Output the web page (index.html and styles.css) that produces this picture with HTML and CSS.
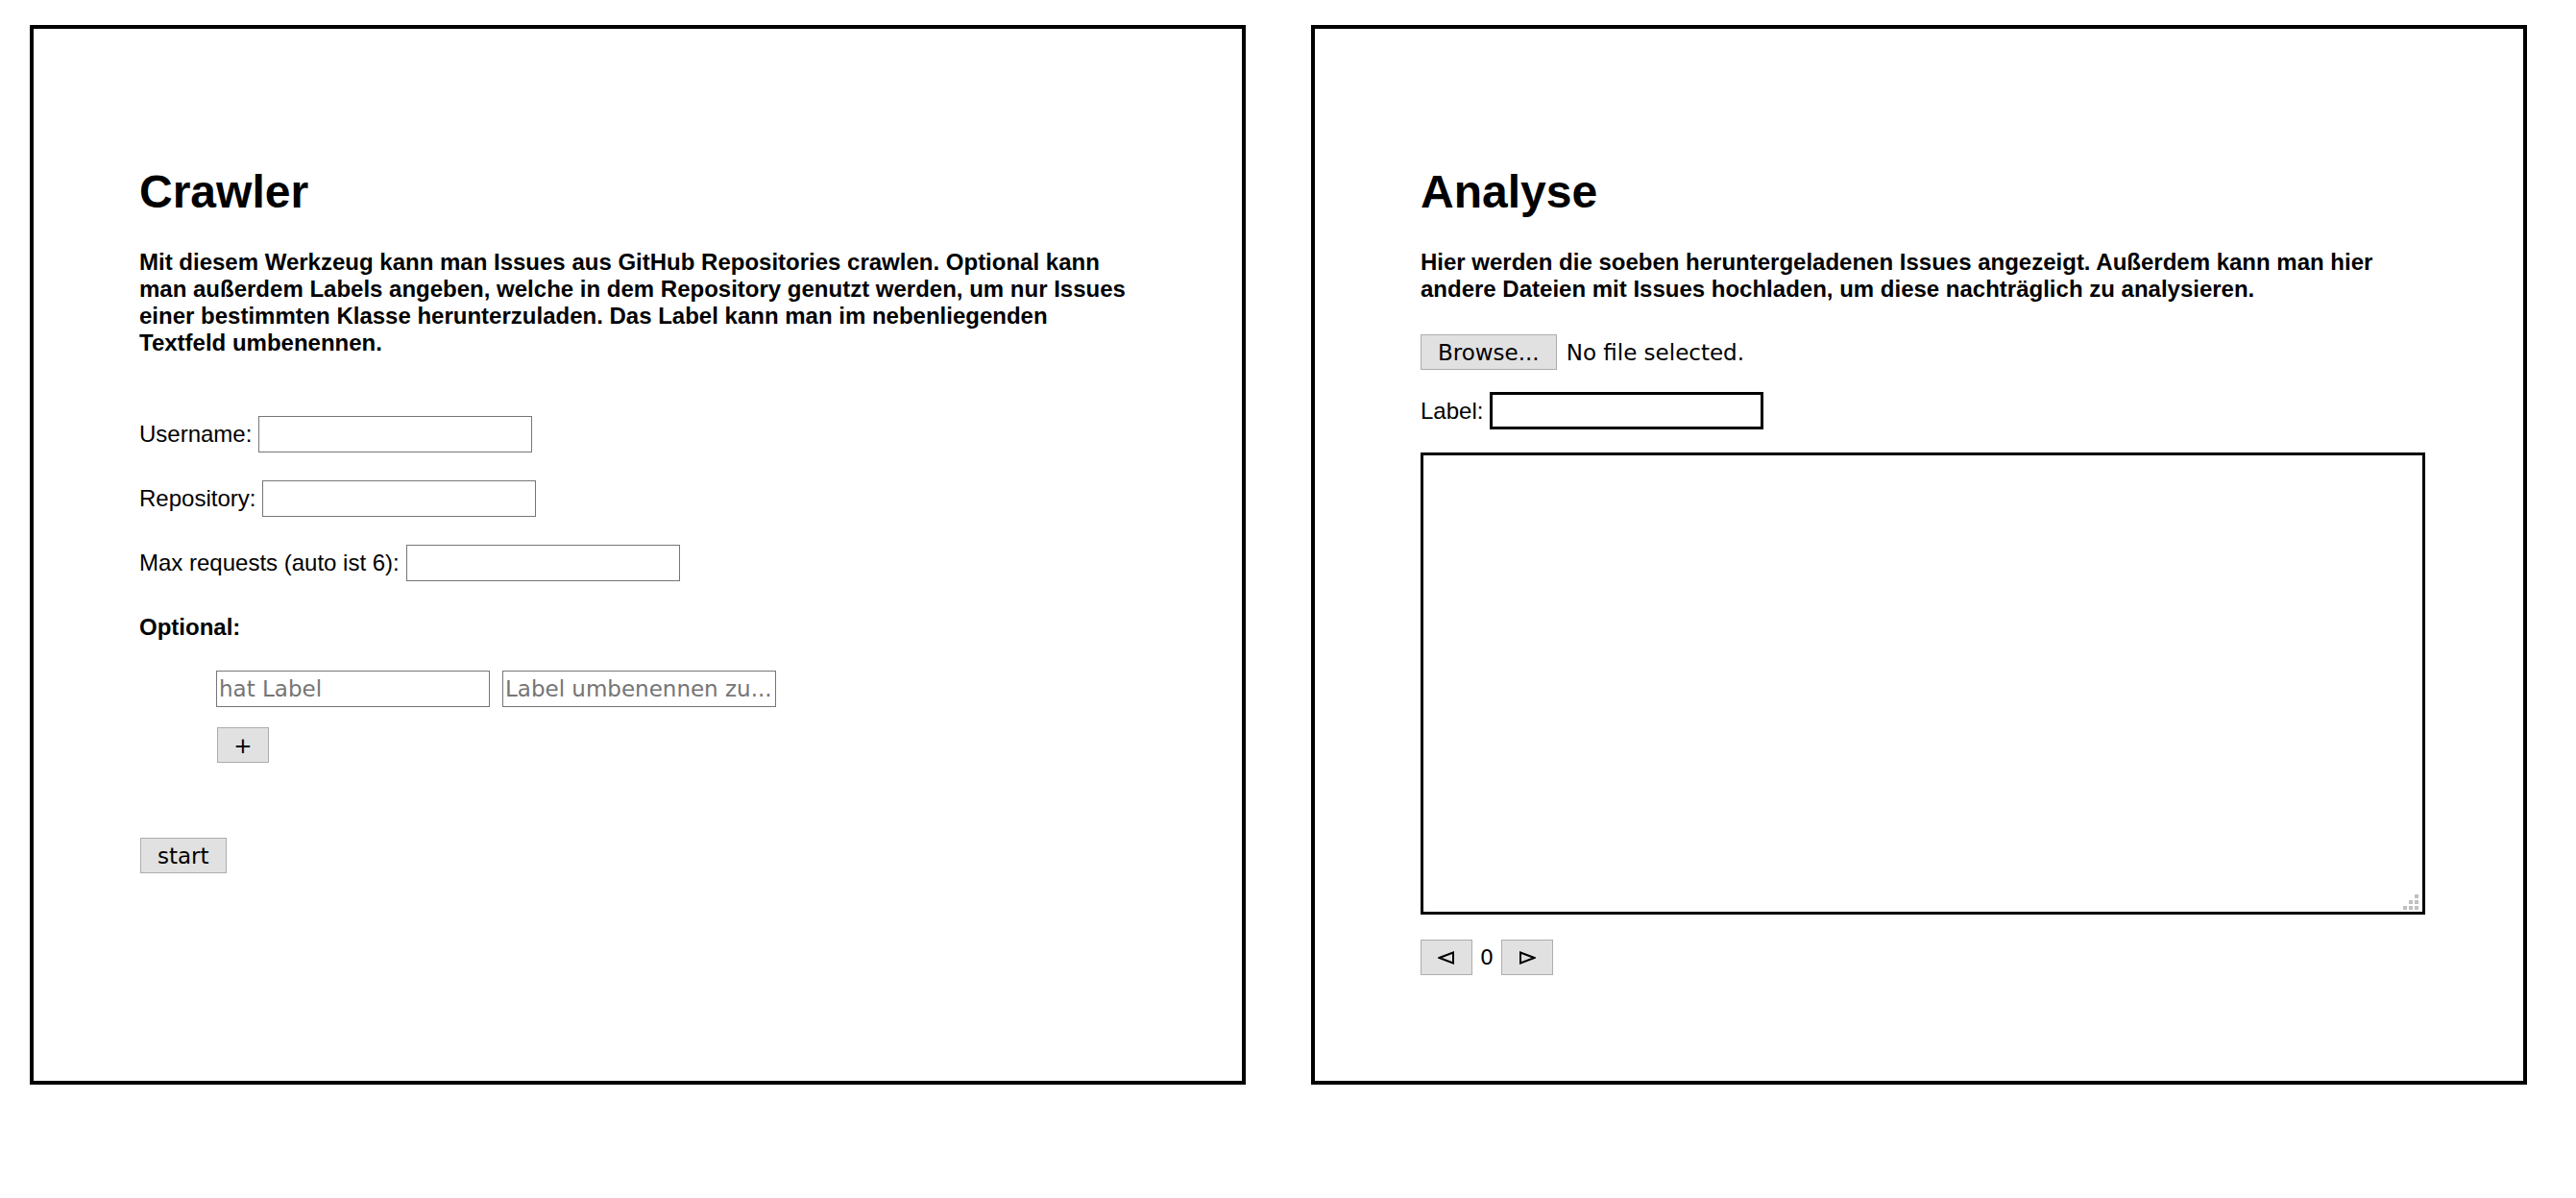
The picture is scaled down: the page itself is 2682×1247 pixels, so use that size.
FILE: index.html
```html
<!DOCTYPE html>
<html lang="de">
<head>
    <meta charset="UTF-8">
    <title>Issue Crawler</title>
    <link rel="stylesheet" href="styles.css">
</head>
<body>
    <div class="page">
        <div class="panel">
            <h1>Crawler</h1>
            <p class="intro">Mit diesem Werkzeug kann man Issues aus GitHub Repositories crawlen. Optional kann man außerdem Labels angeben, welche in dem Repository genutzt werden, um nur Issues einer bestimmten Klasse herunterzuladen. Das Label kann man im nebenliegenden Textfeld umbenennen.</p>
            <form id="crawlForm">
                <div class="row first">
                    <label for="username">Username:</label>
                    <input type="text" id="username" class="field">
                </div>
                <div class="row">
                    <label for="repository">Repository:</label>
                    <input type="text" id="repository" class="field">
                </div>
                <div class="row">
                    <label for="maxRequests">Max requests (auto ist 6):</label>
                    <input type="text" id="maxRequests" class="field">
                </div>
                <div class="optional-title">Optional:</div>
                <div class="label-list">
                    <div class="label-pair">
                        <input type="text" class="field" placeholder="hat Label">
                        <input type="text" class="field" placeholder="Label umbenennen zu...">
                    </div>
                    <button type="button" class="btn add-btn">+</button>
                </div>
                <button type="submit" class="btn start-btn">start</button>
            </form>
        </div>

        <div class="panel">
            <h1>Analyse</h1>
            <p class="intro">Hier werden die soeben heruntergeladenen Issues angezeigt. Außerdem kann man hier andere Dateien mit Issues hochladen, um diese nachträglich zu analysieren.</p>
            <div class="file-row">
                <button type="button" class="btn">Browse...</button>
                <span class="file-name">No file selected.</span>
            </div>
            <div class="row label-row">
                <label for="labelName">Label:</label>
                <input type="text" id="labelName" class="field dark">
            </div>
            <div class="issue-box">
                <textarea id="issues"></textarea>
                <svg class="grip" width="16" height="16" viewBox="0 0 16 16">
                    <rect x="12" y="0" width="4" height="4"/>
                    <rect x="6" y="6" width="4" height="4"/>
                    <rect x="12" y="6" width="4" height="4"/>
                    <rect x="0" y="12" width="4" height="4"/>
                    <rect x="6" y="12" width="4" height="4"/>
                    <rect x="12" y="12" width="4" height="4"/>
                </svg>
            </div>
            <div class="nav-row">
                <button type="button" class="btn nav-btn">
                    <svg width="18" height="14" viewBox="0 0 18 14"><polygon points="1.5,7 16,1.5 16,12.5"/></svg>
                </button>
                <span class="counter">0</span>
                <button type="button" class="btn nav-btn">
                    <svg width="18" height="14" viewBox="0 0 18 14"><polygon points="16.5,7 2,1.5 2,12.5"/></svg>
                </button>
            </div>
        </div>
    </div>
</body>
</html>
```

FILE: styles.css
```css
body {
    margin: 0;
    font-family: "Liberation Sans", Arial, sans-serif;
    font-size: 24px;
    color: #000;
    background: #fff;
}
.page {
    display: flex;
    gap: 68px;
    padding: 26px 0 0 31px;
}
.panel {
    width: 1266px;
    height: 1103px;
    box-sizing: border-box;
    border: 4px solid #000;
    padding: 111px 103px 0 110px;
}
h1 {
    font-size: 48px;
    margin: 31px 0 32px;
}
.intro {
    font-weight: bold;
    margin: 0;
    max-width: 1035px;
}
.row {
    display: flex;
    align-items: center;
    gap: 7px;
    height: 38px;
    margin-top: 29px;
}
.row.first {
    margin-top: 62px;
}
.field {
    width: 285px;
    height: 38px;
    box-sizing: border-box;
    border: 1px solid #767676;
    padding: 0 2px;
    font-family: "DejaVu Sans", sans-serif;
    font-size: 23px;
    background: #fff;
    outline: none;
}
.field::placeholder {
    color: #757575;
}
.field.dark {
    height: 39px;
    border: 3px solid #000;
}
.optional-title {
    font-weight: bold;
    margin-top: 34px;
}
.label-list {
    margin: 31px 0 0 80px;
}
.label-pair {
    display: flex;
    gap: 13px;
}
.btn {
    height: 37px;
    box-sizing: border-box;
    padding: 0 17px;
    border: 1px solid #adadad;
    background: #e1e1e1;
    font-family: "DejaVu Sans", sans-serif;
    font-size: 23px;
    color: #000;
    cursor: pointer;
}
.add-btn {
    display: block;
    margin: 21px 0 0 1px;
    width: 54px;
    padding: 0;
}
.start-btn {
    display: block;
    margin: 78px 0 0 1px;
}
.file-row {
    display: flex;
    align-items: center;
    gap: 10px;
    margin-top: 33px;
}
.file-name {
    font-family: "DejaVu Sans", sans-serif;
    font-size: 23px;
}
.label-row {
    height: 39px;
    margin-top: 23px;
}
.issue-box {
    position: relative;
    width: 1046px;
    height: 481px;
    margin-top: 24px;
}
.issue-box textarea {
    display: block;
    width: 100%;
    height: 100%;
    box-sizing: border-box;
    border: 3px solid #000;
    resize: none;
    outline: none;
    font-family: "DejaVu Sans", sans-serif;
    font-size: 23px;
}
.grip {
    position: absolute;
    right: 7px;
    bottom: 5px;
    fill: #c0c0c0;
}
.nav-row {
    display: flex;
    align-items: center;
    gap: 8px;
    margin-top: 26px;
}
.nav-btn {
    width: 54px;
    padding: 0;
    display: flex;
    align-items: center;
    justify-content: center;
}
.nav-btn svg {
    fill: none;
    stroke: #000;
    stroke-width: 2;
    stroke-linejoin: miter;
}
.counter {
    font-family: "DejaVu Sans", sans-serif;
    font-size: 22px;
}
```
